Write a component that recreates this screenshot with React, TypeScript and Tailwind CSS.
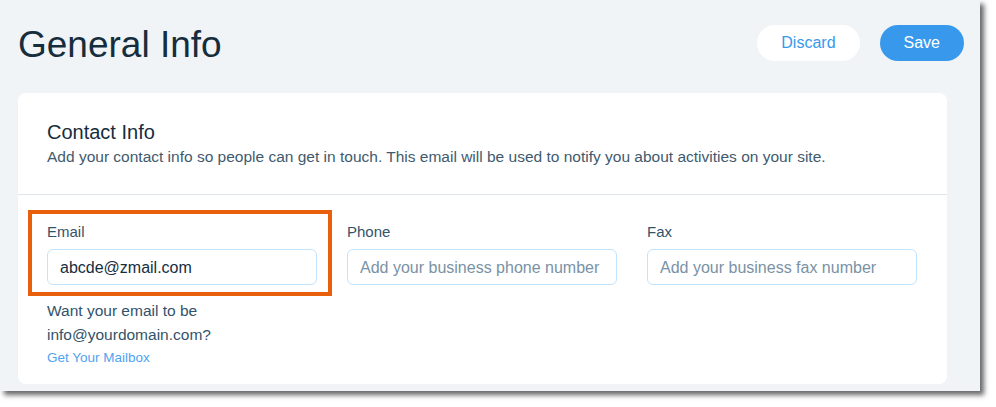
import { useState } from 'react';

const font = { fontFamily: '"Liberation Sans", Arial, sans-serif' };

interface FieldProps {
  label: string;
  value?: string;
  placeholder?: string;
  highlight?: boolean;
  children?: React.ReactNode;
}

function Field({ label, value, placeholder, highlight, children }: FieldProps) {
  const [text, setText] = useState(value ?? '');
  return (
    <div className="relative w-[270px]">
      {highlight && (
        <div className="pointer-events-none absolute -left-[19px] -top-[12px] h-[86px] w-[304px] border-4 border-[#e8600c]" />
      )}
      <label className="block text-[15px] leading-[20px] text-[#32536a]">{label}</label>
      <input
        className="mt-[7px] block h-[36px] w-[270px] rounded-md border border-[#c1e4fe] bg-white px-[12px] pt-[1px] text-[16px] text-[#162d3d] outline-none placeholder:text-[#7a92a5]"
        style={font}
        value={text}
        placeholder={placeholder}
        onChange={(e) => setText(e.target.value)}
      />
      {children}
    </div>
  );
}

export default function App() {
  return (
    <div className="h-[407px] w-[996px] bg-white" style={font}>
      <div className="h-[391px] w-[980px] bg-[#f0f4f7] shadow-[4px_4px_5px_rgba(0,0,0,0.6)]">
        {/* header */}
        <div className="flex items-start justify-between pl-[18px] pr-[16px] pt-[23px]">
          <h1 className="text-[37px] leading-[44px] text-[#162d3d]">General Info</h1>
          <div className="mt-[2px] flex gap-[20px]">
            <button className="h-[36px] rounded-full bg-white px-[24px] text-[16px] text-[#3899ec]">
              Discard
            </button>
            <button className="h-[36px] rounded-full bg-[#3899ec] px-[24px] text-[16px] text-white">
              Save
            </button>
          </div>
        </div>

        {/* card */}
        <div className="ml-[18px] mt-[26px] w-[929px] rounded-lg bg-white">
          <div className="border-b border-[#dfe5eb] px-[29px] pb-[27px] pt-[27px]">
            <h2 className="text-[20px] leading-[24px] text-[#162d3d]">Contact Info</h2>
            <p className="mt-[3px] text-[15.5px] leading-[20px] text-[#3f5a6e]">
              Add your contact info so people can get in touch. This email will be used to notify you about activities on your site.
            </p>
          </div>
          <div className="flex gap-[30px] px-[29px] pb-[15px] pt-[27px]">
            <Field label="Email" value="abcde@zmail.com" highlight>
              <p className="mt-[14px] text-[15.5px] leading-[24px] text-[#32536a]">
                Want your email to be
                <br />
                info@yourdomain.com?
              </p>
              <a href="#" className="block text-[13.5px] leading-[22px] text-[#4ea3f0]">
                Get Your Mailbox
              </a>
            </Field>
            <Field label="Phone" placeholder="Add your business phone number" />
            <Field label="Fax" placeholder="Add your business fax number" />
          </div>
        </div>
      </div>
    </div>
  );
}
